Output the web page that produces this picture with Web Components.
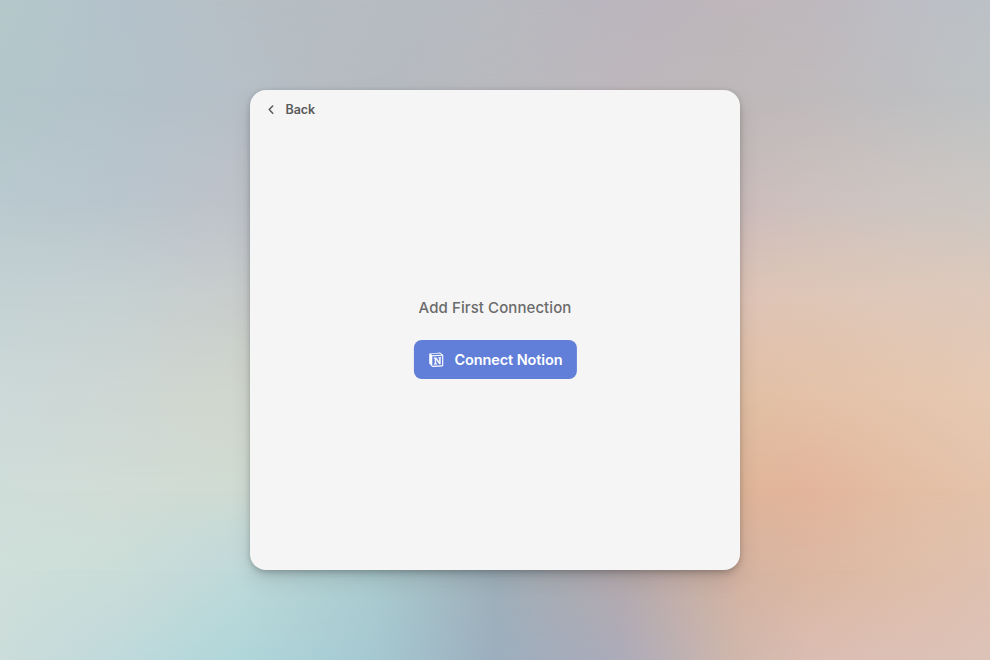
<!DOCTYPE html>
<html lang="en"><head><meta charset="utf-8"><title>Add Connection</title>
<style>html,body{margin:0;height:100%;overflow:hidden}body{font-family:Inter,"Liberation Sans",sans-serif}</style></head>
<body>
<mesh-backdrop><connect-card><back-link slot="header">Back</back-link><span>Add First Connection</span><notion-button>Connect Notion</notion-button></connect-card></mesh-backdrop>
<script>
const define=(name,html,init)=>customElements.define(name,class extends HTMLElement{
  constructor(){super();this.attachShadow({mode:'open'}).innerHTML=html;if(init)init(this.shadowRoot);}
});
// Colour mesh: each row is a horizontal gradient, faded into the row above it.
const cols=[0,120,240,370,495,620,740,810,900,990];
const rows=[
[0,'b4c9cb b4c2cb b6bfc5 b6bcc2 b8babf bbb6be beb7bb beb8bd bdbec4 bcc1c6'],
[90,'b3c6ca b4c2ca b6bfc7 b5babf b8b9bd bdb7bc bdb8b9 bfbabc bebec1 bec2c4'],
[200,'b9c9cf b9c5cd bec2c9 bbbfc4 bebcc0 c2babd cbbcbc cdc1be cdc5c1 ccc7c3'],
[300,'c5d2d3 c6d1d1 c9cdcc c0c6c8 c2c0c0 c8bfba dfc4b6 dfc6b6 dfc8b9 dfc9bb'],
[400,'ccd9d8 ced7d4 d1d7cd c3cbcb c4bfba d2bfaf e1bfa3 e4c1a7 e5c5ac e6c9b3'],
[490,'cfddd9 d1dcd6 cfdbd3 b9cccc b2b6b8 c8b0a4 e0b599 e2b59b e3bda3 e4c2aa'],
[570,'cfdfda cbddd8 bfd9da acccd0 9fb0ba b5aaad d5b3a1 dcb7a2 dfbda8 dfc1b0'],
[660,'cbdcd9 bfd9dc afd6d9 a5c9d1 9caebd acabba d0b7ab dabdb2 dcc0b5 dcc2b7']];
define('mesh-backdrop',`<style>:host{display:grid;place-items:center;width:100%;height:100%;position:relative;isolation:isolate}
.layer{position:absolute;inset:0;z-index:-1}</style><slot></slot>`,root=>{
  rows.forEach(([y,c],i)=>{
    const d=document.createElement('div');d.className='layer';
    d.style.background='linear-gradient(90deg,'+c.split(' ').map((v,j)=>`#${v} ${cols[j]/9.9}%`).join()+')';
    if(i)d.style.maskImage=`linear-gradient(transparent ${rows[i-1][0]/6.6}%,#000 ${y/6.6}%)`;
    root.append(d);
  });
});
define('connect-card',`<style>:host{display:flex;flex-direction:column;box-sizing:border-box;width:490px;height:480px;border-radius:16px;background:#f5f5f5;box-shadow:0 10px 24px -3px rgba(0,0,0,.13),0 4px 8px -2px rgba(0,0,0,.24),0 0 5px rgba(0,0,0,.08)}
header{display:flex;height:39px;padding-left:16px}
main{flex:1;display:flex;flex-direction:column;align-items:center;gap:20px;padding-top:167px;color:#6b6b6b;font-size:15px;line-height:24px;font-weight:500;letter-spacing:.08px}</style>
<header><slot name="header"></slot></header><main><slot></slot></main>`);
define('back-link',`<style>:host{display:flex;align-items:center;gap:9.5px;color:#5a5a5a;font-size:12.5px;font-weight:600;letter-spacing:-.05px}svg{display:block}</style>
<svg width="10" height="10" viewBox="0 0 10 10" fill="none" stroke="currentColor" stroke-width="1.5" stroke-linecap="round" stroke-linejoin="round"><path d="M6.7 1 3.2 4.6l3.5 3.6"/></svg><slot></slot>`);
define('notion-button',`<style>:host{display:flex;box-sizing:border-box;align-items:center;width:163px;height:39px;padding-left:15px;gap:11px;border-radius:8px;background:#617fd9;color:#fff;font-size:14.5px;font-weight:600;letter-spacing:-.1px;white-space:nowrap;transform:translateX(-.1px)}svg{display:block;flex:none}</style>
<svg width="15" height="15" viewBox="0 0 24 24" fill="currentColor"><path fill-rule="evenodd" d="M1 2.3 15.8 1c1.7-.1 2.3 0 3.3.8l3 2.1c.7.5.9.8.9 1.5v15.8c0 1.1-.5 1.7-1.8 1.8L6.7 23.8c-1.1.1-1.7-.1-2.3-.9L1.3 19c-.6-.8-.8-1.2-.8-2V3.8c0-.8.1-1.4.5-1.5ZM3.2 3.2 5.5 5.1 20 4.2 17.2 2.3ZM5.4 7v14.1c0 .7.4 1 1 .9l14-.8c.6 0 .8-.3.8-.9V6.6c0-.5-.3-.8-.8-.7l-14 .7c-.7 0-1 0-1 .4Z"/><path stroke="currentColor" stroke-width=".8" d="M8 9.2 11.7 9l5 7.4V10l-1.3-.3v-.9l4-.2v.9l-1 .4v9.3l-1.8.1-5.6-8.2v7.2l1.6.4v.9l-4 .2v-.9l1.1-.4v-8L8 10Z"/></svg><slot></slot>`);
</script></body></html>
